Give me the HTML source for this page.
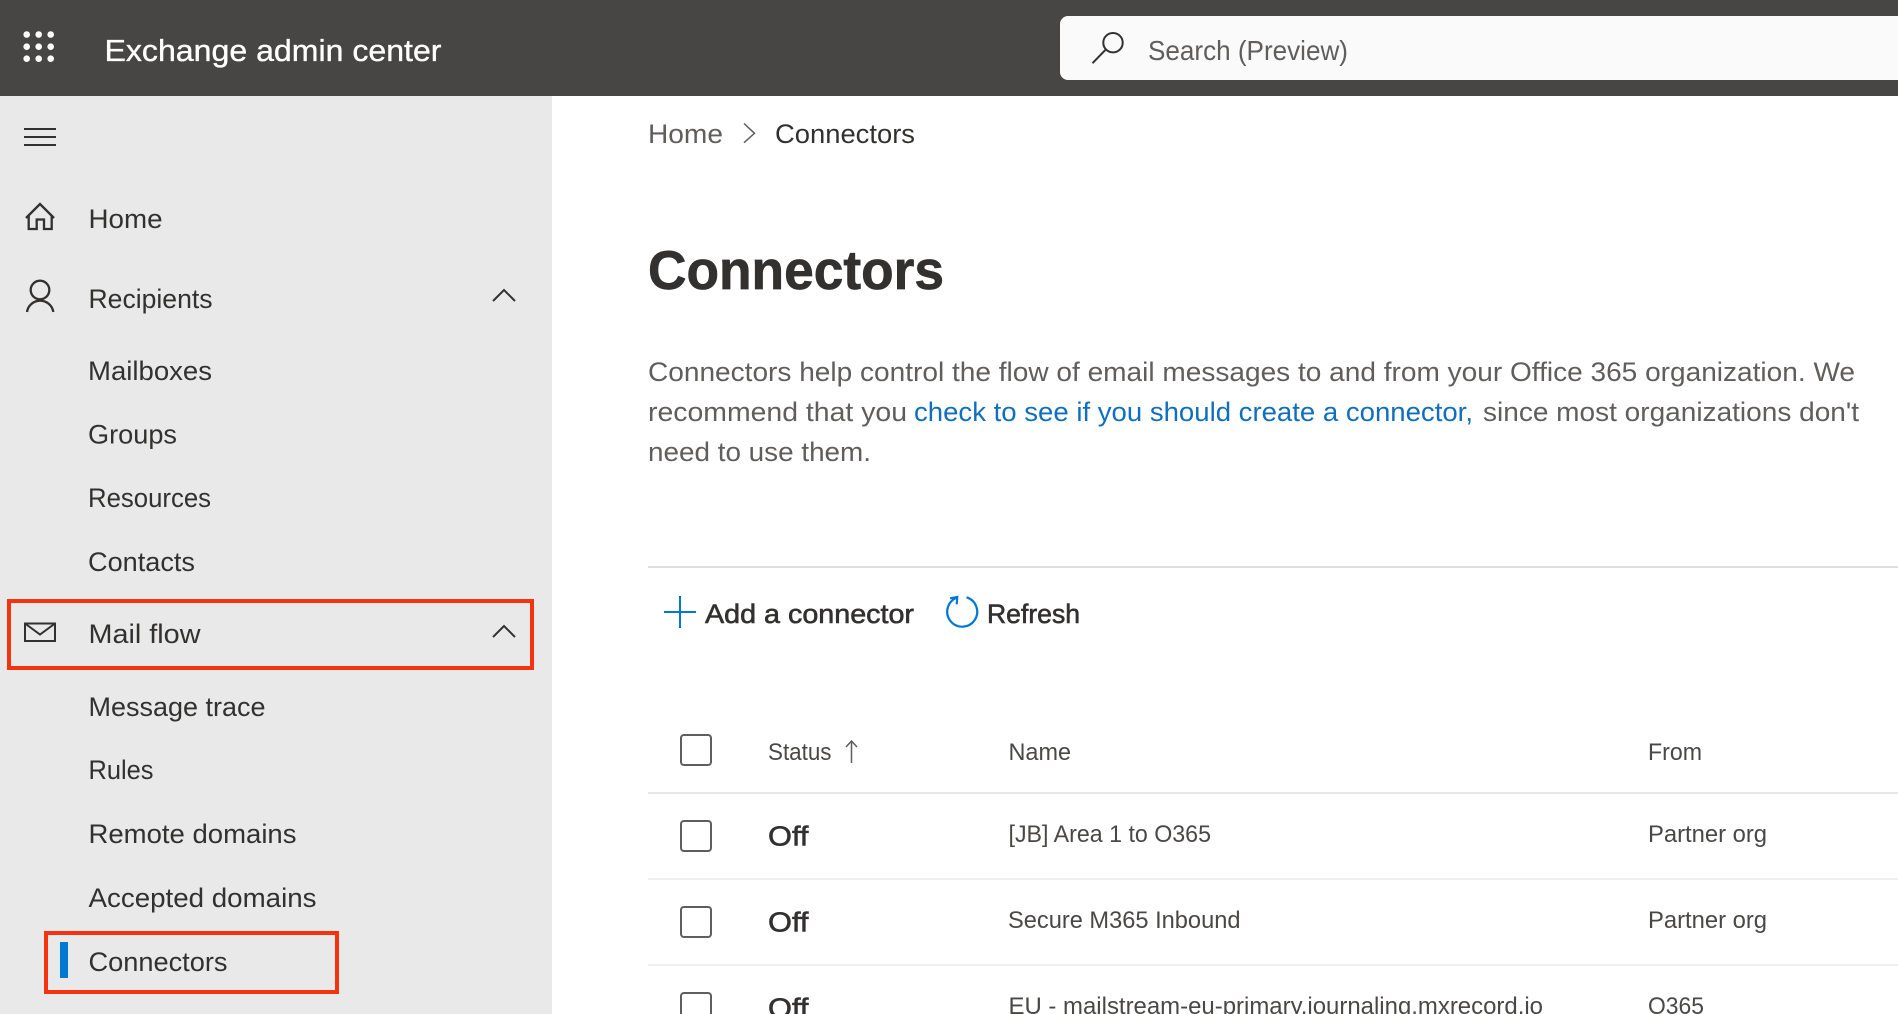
<!DOCTYPE html>
<html lang="en"><head><meta charset="utf-8"><title>Exchange admin center - Connectors</title>
<style>
html,body{margin:0;padding:0;background:#fff;width:1898px;height:1014px;overflow:hidden}
svg{display:block;position:absolute;left:0;top:0}
text{font-family:"Liberation Sans",Arial,sans-serif;font-size:27px;fill:#323130}
.nav{font-size:27px;fill:#323130}
.body{fill:#605e5c;font-size:27px}
.tb{font-size:24px;fill:#4a4846}
.semi{stroke:#323130;stroke-width:.6px}
</style></head><body>
<svg width="1898" height="1014" viewBox="0 0 1898 1014">
<rect width="1898" height="1014" fill="#fff"/>
<rect width="1898" height="96" fill="#484644"/>
<rect y="96" width="552" height="918" fill="#e9e9e9"/>

<g fill="#fff"><circle cx="26.700" cy="34.500" r="3.300"/><circle cx="38.700" cy="34.500" r="3.300"/><circle cx="50.700" cy="34.500" r="3.300"/><circle cx="26.700" cy="46.700" r="3.300"/><circle cx="38.700" cy="46.700" r="3.300"/><circle cx="50.700" cy="46.700" r="3.300"/><circle cx="26.700" cy="58.700" r="3.300"/><circle cx="38.700" cy="58.700" r="3.300"/><circle cx="50.700" cy="58.700" r="3.300"/></g>
<text x="104.500" y="61" textLength="337" lengthAdjust="spacingAndGlyphs" style="font-size:31px;fill:#fff;stroke:#fff;stroke-width:.35px">Exchange admin center</text>

<path d="M1060 24a8 8 0 0 1 8-8H1898V80H1068a8 8 0 0 1-8-8z" fill="#fafafa"/>
<g fill="none" stroke="#323130" stroke-width="2"><circle cx="1113" cy="42.700" r="9.700"/><path d="M1105.500 49.800L1092.500 63.200"/></g>
<text x="1148" y="60" textLength="200" lengthAdjust="spacingAndGlyphs" style="font-size:28px;fill:#605e5c">Search (Preview)</text>

<path d="M24 129H56M24 137H56M24 145H56" stroke="#323130" stroke-width="2" fill="none"/>
<path d="M26 218L40 204L54 218M28.700 215V229H36.700V219.500H44V229H51.700V215" fill="none" stroke="#323130" stroke-width="2.300"/>
<text class="nav" x="88.500" y="228" textLength="74" lengthAdjust="spacingAndGlyphs">Home</text>
<circle cx="40" cy="290" r="9.300" fill="none" stroke="#323130" stroke-width="2.300"/>
<path d="M27 312A13.300 13.300 0 0 1 53.300 312" fill="none" stroke="#323130" stroke-width="2.300"/>
<text class="nav" x="88.500" y="308" textLength="124" lengthAdjust="spacingAndGlyphs">Recipients</text>
<path d="M493 301L504 290L515 301" fill="none" stroke="#323130" stroke-width="2"/>
<text class="nav" x="88" y="380" textLength="124" lengthAdjust="spacingAndGlyphs">Mailboxes</text>
<text class="nav" x="88" y="443.500" textLength="89" lengthAdjust="spacingAndGlyphs">Groups</text>
<text class="nav" x="88" y="507" textLength="123" lengthAdjust="spacingAndGlyphs">Resources</text>
<text class="nav" x="88" y="571" textLength="107" lengthAdjust="spacingAndGlyphs">Contacts</text>

<rect x="9" y="601" width="523" height="67" fill="none" stroke="#f5330f" stroke-width="4"/>
<path d="M25 623.500H55V641H25zM25 623.500L40 634.500L55 623.500" fill="none" stroke="#323130" stroke-width="2"/>
<text class="nav" x="88.500" y="643" textLength="112" lengthAdjust="spacingAndGlyphs">Mail flow</text>
<path d="M493 637L504 626L515 637" fill="none" stroke="#323130" stroke-width="2"/>
<text class="nav" x="88.500" y="716" textLength="177" lengthAdjust="spacingAndGlyphs">Message trace</text>
<text class="nav" x="88.500" y="779" textLength="65" lengthAdjust="spacingAndGlyphs">Rules</text>
<text class="nav" x="88.500" y="843" textLength="208" lengthAdjust="spacingAndGlyphs">Remote domains</text>
<text class="nav" x="88.500" y="907" textLength="228" lengthAdjust="spacingAndGlyphs">Accepted domains</text>
<rect x="46" y="933" width="291" height="59" fill="none" stroke="#f5330f" stroke-width="4"/>
<rect x="60" y="942" width="8" height="36" fill="#0078d4"/>
<text class="nav" x="88.500" y="971" textLength="139" lengthAdjust="spacingAndGlyphs">Connectors</text>

<text x="648" y="143" textLength="75" lengthAdjust="spacingAndGlyphs" style="fill:#605e5c">Home</text>
<path d="M744 123.500L754.500 133.300L744 142.700" fill="none" stroke="#605e5c" stroke-width="1.500"/>
<text x="775" y="143" textLength="140" lengthAdjust="spacingAndGlyphs">Connectors</text>
<text x="648" y="289" textLength="296" lengthAdjust="spacingAndGlyphs" style="font-size:55px;font-weight:700;stroke:#323130;stroke-width:.7px">Connectors</text>

<text class="body" x="648" y="381" textLength="1207" lengthAdjust="spacingAndGlyphs">Connectors help control the flow of email messages to and from your Office 365 organization. We</text>
<text class="body" x="648" y="421" textLength="259" lengthAdjust="spacingAndGlyphs">recommend that you</text>
<text class="body" x="914" y="421" textLength="559" lengthAdjust="spacingAndGlyphs" style="fill:#106ebe">check to see if you should create a connector,</text>
<text class="body" x="1483" y="421" textLength="376" lengthAdjust="spacingAndGlyphs">since most organizations don't</text>
<text class="body" x="648" y="461" textLength="223" lengthAdjust="spacingAndGlyphs">need to use them.</text>

<rect x="648" y="566" width="1250" height="2" fill="#e1dfdd"/>

<path d="M664 612H696M680 596V628" stroke="#0078d4" stroke-width="2" fill="none"/>
<text class="semi" x="705" y="623" textLength="209" lengthAdjust="spacingAndGlyphs">Add a connector</text>
<path d="M966.500 597.300A15 15 0 1 1 957.300 597.500" fill="none" stroke="#0078d4" stroke-width="2.200"/>
<path d="M950 598.300L957.300 597L956.700 604.300" fill="none" stroke="#0078d4" stroke-width="2.200"/>
<text class="semi" x="987" y="623" textLength="93" lengthAdjust="spacingAndGlyphs">Refresh</text>

<rect x="681" y="735" width="30" height="30" rx="3" fill="none" stroke="#605e5c" stroke-width="2"/>
<text class="tb" x="768" y="760" textLength="63.500" lengthAdjust="spacingAndGlyphs">Status</text>
<path d="M851.500 741V763M846 747L851.500 741L857 747" fill="none" stroke="#605e5c" stroke-width="1.500"/>
<text class="tb" x="1008.500" y="760" textLength="62.500" lengthAdjust="spacingAndGlyphs">Name</text>
<text class="tb" x="1648" y="760" textLength="54" lengthAdjust="spacingAndGlyphs">From</text>

<rect x="648" y="792" width="1250" height="2" fill="#e9e8e7"/>
<rect x="648" y="878" width="1250" height="2" fill="#f1f0ef"/>
<rect x="648" y="964" width="1250" height="2" fill="#f1f0ef"/>

<rect x="681" y="821" width="30" height="30" rx="3" fill="none" stroke="#605e5c" stroke-width="2"/>
<text class="semi" x="768" y="845.500" textLength="40.500" lengthAdjust="spacingAndGlyphs" style="font-size:28px">Off</text>
<text class="tb" x="1008.500" y="842" textLength="202.500" lengthAdjust="spacingAndGlyphs">[JB] Area 1 to O365</text>
<text class="tb" x="1648" y="842" textLength="119" lengthAdjust="spacingAndGlyphs">Partner org</text>

<rect x="681" y="907" width="30" height="30" rx="3" fill="none" stroke="#605e5c" stroke-width="2"/>
<text class="semi" x="768" y="931.500" textLength="40.500" lengthAdjust="spacingAndGlyphs" style="font-size:28px">Off</text>
<text class="tb" x="1008" y="928" textLength="232.500" lengthAdjust="spacingAndGlyphs">Secure M365 Inbound</text>
<text class="tb" x="1648" y="928" textLength="119" lengthAdjust="spacingAndGlyphs">Partner org</text>

<rect x="681" y="993" width="30" height="30" rx="3" fill="none" stroke="#605e5c" stroke-width="2"/>
<text class="semi" x="768" y="1017.500" textLength="40.500" lengthAdjust="spacingAndGlyphs" style="font-size:28px">Off</text>
<text class="tb" x="1008.500" y="1014" textLength="534.500" lengthAdjust="spacingAndGlyphs">EU - mailstream-eu-primary.journaling.mxrecord.io</text>
<text class="tb" x="1648" y="1014" textLength="56" lengthAdjust="spacingAndGlyphs">O365</text>
</svg>
</body></html>
